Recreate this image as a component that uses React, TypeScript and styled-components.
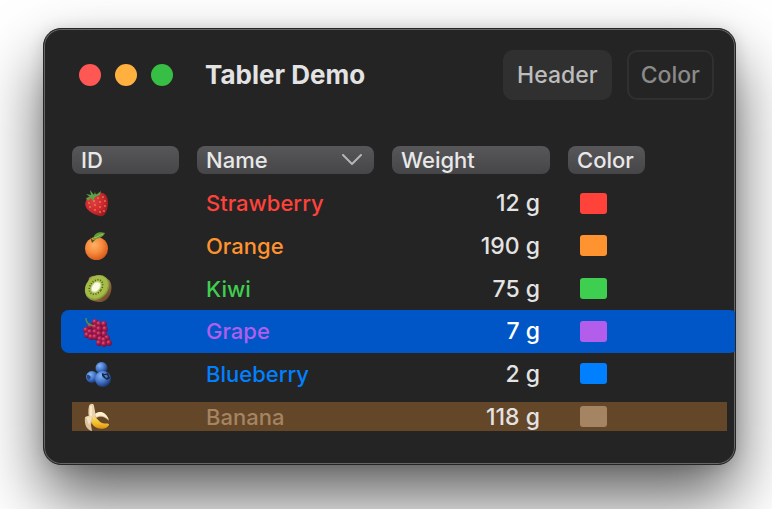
import React from "react";
import styled, { createGlobalStyle } from "styled-components";

const GlobalStyle = createGlobalStyle`
  *, *::before, *::after { box-sizing: border-box; }
  html, body { margin: 0; background: #fff; }
  body, button { font-family: Inter, "Liberation Sans", sans-serif; }
`;

const Desktop = styled.main`
  min-height: 100vh;
  display: flex;
  padding: 28px 36px 44px 43px;
  overflow: hidden;
`;

const Window = styled.section`
  flex: 1;
  display: flex;
  flex-direction: column;
  overflow: hidden;
  padding: 0 8px 0 28px;
  border: 1px solid #262626;
  border-radius: 18px;
  background: #242424;
  color: #e3e3e3;
  box-shadow:
    inset 0 0 0 1px #666,
    0 33px 64px rgba(0, 0, 0, 0.62),
    0 2px 16px rgba(0, 0, 0, 0.14);
`;

const Toolbar = styled.header`
  display: flex;
  align-items: center;
  height: 91px;
  padding: 0 13px 0 7px;
`;

const Lights = styled.div`
  display: flex;
  gap: 14px;
`;

const Light = styled.button<{ $color: string }>`
  width: 22px;
  height: 22px;
  padding: 0;
  border: 0;
  border-radius: 50%;
  background: ${(p) => p.$color};
`;

const Title = styled.h1`
  flex: 1;
  margin: 0 0 0 32px;
  font-size: 26px;
  line-height: 32px;
  font-weight: 700;
`;

const ToolButtons = styled.div`
  display: flex;
  gap: 15px;
`;

const ToolButton = styled.button<{ $filled?: boolean }>`
  height: 50px;
  padding: 0 12px;
  border: 2px solid #303030;
  border-radius: 10px;
  background: ${(p) => (p.$filled ? "#303030" : "transparent")};
  color: ${(p) => (p.$filled ? "#bdbdbd" : "#8a8a8a")};
  font-size: 23px;
  font-weight: 500;
`;

const Table = styled.table`
  display: block;
  margin-top: 26px;
  font-size: 22px;
  line-height: 28px;
`;

const Head = styled.thead`
  display: block;
  margin-bottom: 8px;
`;

const Body = styled.tbody`
  display: grid;
  grid-template-rows: repeat(6, 1fr);
  height: 256px;
`;

const Row = styled.tr<{ $state?: "selected" | "hovered" }>`
  display: grid;
  grid-template-columns: 107fr 177fr 158fr 77px 64px;
  column-gap: 18px;
  align-items: center;
  margin: ${(p) => (p.$state === "hovered" ? "7px 0" : p.$state === "selected" ? "0 -11px" : "0")};
  padding: ${(p) => (p.$state === "selected" ? "0 11px" : "0")};
  border-radius: ${(p) => (p.$state === "selected" ? "8px" : "0")};
  background: ${(p) =>
    p.$state === "selected" ? "#0056c6" : p.$state === "hovered" ? "#644628" : "transparent"};
  color: ${(p) => (p.$state === "selected" ? "#fff" : "inherit")};
`;

const HeadCell = styled.th`
  padding: 0;
`;

const SortButton = styled.button`
  display: flex;
  align-items: center;
  justify-content: space-between;
  width: 100%;
  height: 28px;
  padding: 0 12px 0 9px;
  border: 0;
  border-radius: 8px;
  background: linear-gradient(#57575a, #464648);
  color: #e8e8e8;
  font-size: 22px;
  font-weight: 500;
  line-height: 28px;
`;

const Cell = styled.td<{ $color?: string }>`
  padding: 0 10px 0 9px;
  color: ${(p) => p.$color ?? "inherit"};
  font-weight: 500;
  white-space: nowrap;
`;

const NumberCell = styled(Cell)`
  font-size: 23px;
  text-align: right;
`;

const Fruit = styled.svg.attrs({ viewBox: "0 1 30 28", role: "img" })`
  display: block;
  width: 30px;
  height: 28px;
  overflow: visible;
`;

const Swatch = styled.span<{ $color: string }>`
  display: block;
  width: 27px;
  height: 21px;
  margin-left: 3px;
  border-radius: 3px;
  background: ${(p) => p.$color};
`;

const Strawberry = () => (
  <Fruit aria-label="Strawberry">
    <defs>
      <radialGradient id="berry" cx=".38" cy=".4" r=".7">
        <stop offset="0" stopColor="#e23c40" />
        <stop offset=".6" stopColor="#cb2830" />
        <stop offset="1" stopColor="#981820" />
      </radialGradient>
    </defs>
    <path d="M5 13C6 7 13 7 19 5c5-1 8 4 8 9 0 7-2 12-5 14-5 1-15-4-17-9-1-2-1-4 0-6z" fill="url(#berry)" />
    <path d="M5 10l4-1-4-3 5 1-1-5 4 5 1-3 1 3 5-4-1 4-5 2-2 4-2-3-3 3z" fill="#58a546" />
    <g fill="#eda84e">
      {[[8,15],[13,13],[17,10],[22,9],[9,19],[14,17],[19,14],[24,13],[14,22],[19,19],[24,18],[19,24],[23,23]].map(([x, y]) => (
        <ellipse key={`${x}-${y}`} cx={x} cy={y} rx=".6" ry=".9" />
      ))}
    </g>
  </Fruit>
);

const Orange = () => (
  <Fruit aria-label="Orange">
    <defs>
      <radialGradient id="orange" cx=".4" cy=".35" r=".65">
        <stop offset="0" stopColor="#ffb264" />
        <stop offset=".55" stopColor="#f78a3c" />
        <stop offset="1" stopColor="#d85d1c" />
      </radialGradient>
    </defs>
    <circle cx="15.5" cy="17.5" r="11.5" fill="url(#orange)" />
    <path d="M9 6l3 3 3-1-2 2-2 2-1-3z" fill="#45601f" />
    <path d="M12 8c1-6 6-8 12-6-2 4-6 6-12 6z" fill="#649b36" />
    <path d="M13 7c4-1 6-3 9-4" stroke="#9bc864" fill="none" />
  </Fruit>
);

const Kiwi = () => (
  <Fruit aria-label="Kiwi">
    <defs>
      <linearGradient id="peel" x1="0" x2="1" y1="0" y2="1">
        <stop offset=".4" stopColor="#b18b58" />
        <stop offset="1" stopColor="#5b3719" />
      </linearGradient>
    </defs>
    <path d="M8 4C14-1 28 2 30 10c2 8-3 18-11 18-8 0-13-4-14-7z" fill="url(#peel)" />
    <ellipse cx="16" cy="13.5" rx="11" ry="13.5" transform="rotate(42 16 13.5)" fill="#8aa03a" />
    <ellipse cx="15.5" cy="13" rx="10.2" ry="12.6" transform="rotate(42 15.5 13)" fill="#a4bb48" />
    <ellipse cx="15" cy="13" rx="5.8" ry="8" transform="rotate(38 15 13)" fill="none" stroke="#4b5a22" strokeWidth="1.6" strokeDasharray="1 1.6" />
    <ellipse cx="15" cy="13" rx="4.4" ry="6.4" transform="rotate(38 15 13)" fill="#cbdc88" />
    <ellipse cx="15" cy="13" rx="3.4" ry="5.2" transform="rotate(38 15 13)" fill="#fbf9ea" />
  </Fruit>
);

const grapes = [[14,6],[18,8],[9,10],[23,8],[14,11],[24,13],[5,14],[9,16],[18,13],[14,16],[23,18],[6,19],[10,21],[18,18],[14,21],[26,22],[19,23],[23,24],[18,27],[28,27],[23,28]];

const Grape = () => (
  <Fruit aria-label="Grape">
    <defs>
      <radialGradient id="grape" cx=".35" cy=".3" r=".7">
        <stop offset="0" stopColor="#e05f88" />
        <stop offset=".4" stopColor="#b02050" />
        <stop offset="1" stopColor="#720d3d" />
      </radialGradient>
    </defs>
    <path d="M13 5l11 3 2 15 3 4-8 1-8-6-9-3 1-6z" fill="#7f1242" />
    {grapes.map(([x, y]) => (
      <circle key={`${x}-${y}`} cx={x} cy={y} r="2.9" fill="url(#grape)" />
    ))}
    <path d="M5 2c0 3 1 5 3 6l4 2" stroke="#4d943d" strokeWidth="1.5" fill="none" />
  </Fruit>
);

const Blueberry = () => (
  <Fruit aria-label="Blueberry">
    <defs>
      <radialGradient id="blue" cx=".35" cy=".3" r=".75">
        <stop offset="0" stopColor="#83b4f4" />
        <stop offset=".5" stopColor="#4679cd" />
        <stop offset="1" stopColor="#182f69" />
      </radialGradient>
    </defs>
    <circle cx="20.5" cy="9" r="6" fill="url(#blue)" />
    <circle cx="11" cy="18" r="6" fill="url(#blue)" />
    <circle cx="22" cy="20" r="8" fill="url(#blue)" />
    <path d="M21 14l3 1 3-1 1 3 1 2-3 2-3-2-2-2z" fill="#18294f" />
    <path d="M23 16l3 0 1 2-2 1z" fill="#527db8" />
    <path d="M6 16l2 0 2 2-2 3-2-2z" fill="#264985" />
  </Fruit>
);

const Banana = () => (
  <Fruit aria-label="Banana">
    <defs>
      <linearGradient id="skin" x2="0" y2="1">
        <stop offset="0" stopColor="#ffe05b" />
        <stop offset=".6" stopColor="#f2b925" />
        <stop offset="1" stopColor="#dc8d15" />
      </linearGradient>
    </defs>
    <path d="M8 4c1-3 5-3 5 0 1 5 2 10 2 14l-6 1C7 14 7 8 8 4z" fill="#ead2ad" />
    <path d="M10 4v11" stroke="#fff0d3" strokeWidth="1.5" />
    <path d="M14 13c4-5 11-3 14 6-5-5-8-5-13-3z" fill="#d9b689" />
    <path d="M14 12c5-4 11-2 14 6-5-5-8-5-13-3z" fill="#fff0cc" />
    <path d="M12 15c4 0 5 4 9 6 3 1 5 0 7 1 0 4-7 6-12 4-5-2-7-7-4-11z" fill="url(#skin)" />
    <path d="M4 15c4-2 7-1 8 1l-2 7 1 6c-5-1-8-6-7-14z" fill="#dcc39d" />
    <path d="M5 15c3-1 5-1 6 1l-3 7z" fill="#f2dfbd" />
  </Fruit>
);

const Chevron = () => (
  <svg width="20" height="12" viewBox="0 0 20 12" aria-hidden="true">
    <path d="M1 1l9 9 9-9" fill="none" stroke="#b5b5b7" strokeWidth="2" strokeLinecap="round" strokeLinejoin="round" />
  </svg>
);

const columns = ["ID", "Name", "Weight", "Color"];

type Item = {
  name: string;
  weight: number;
  color: string;
  Icon: React.FC;
  state?: "selected" | "hovered";
};

const items: Item[] = [
  { name: "Strawberry", weight: 12, color: "#ff423a", Icon: Strawberry },
  { name: "Orange", weight: 190, color: "#ff932f", Icon: Orange },
  { name: "Kiwi", weight: 75, color: "#3fcf50", Icon: Kiwi },
  { name: "Grape", weight: 7, color: "#b35dec", Icon: Grape, state: "selected" },
  { name: "Blueberry", weight: 2, color: "#0080ff", Icon: Blueberry },
  { name: "Banana", weight: 118, color: "#a48463", Icon: Banana, state: "hovered" },
];

export default function App() {
  return (
    <>
      <GlobalStyle />
      <Desktop>
        <Window>
          <Toolbar>
            <Lights>
              <Light $color="#ff5753" aria-label="Close" />
              <Light $color="#ffb03f" aria-label="Minimize" />
              <Light $color="#37bf45" aria-label="Zoom" />
            </Lights>
            <Title>Tabler Demo</Title>
            <ToolButtons>
              <ToolButton $filled>Header</ToolButton>
              <ToolButton>Color</ToolButton>
            </ToolButtons>
          </Toolbar>
          <Table>
            <Head>
              <Row>
                {columns.map((label) => (
                  <HeadCell key={label} scope="col">
                    <SortButton>
                      {label}
                      {label === "Name" && <Chevron />}
                    </SortButton>
                  </HeadCell>
                ))}
              </Row>
            </Head>
            <Body>
              {items.map(({ name, weight, color, Icon, state }) => (
                <Row key={name} $state={state}>
                  <Cell><Icon /></Cell>
                  <Cell $color={color}>{name}</Cell>
                  <NumberCell>{weight} g</NumberCell>
                  <Cell><Swatch $color={color} /></Cell>
                </Row>
              ))}
            </Body>
          </Table>
        </Window>
      </Desktop>
    </>
  );
}
